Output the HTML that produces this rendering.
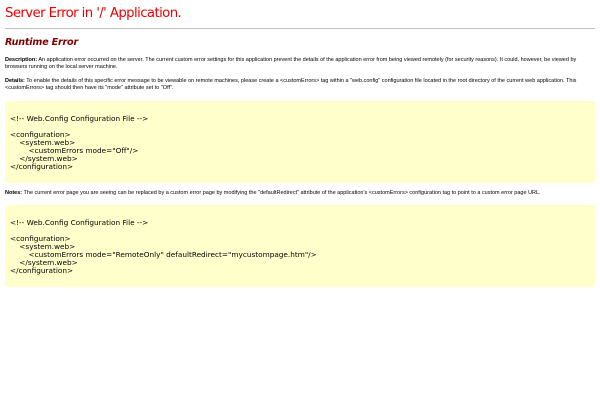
<!DOCTYPE html>
<html><head><meta charset="utf-8"><style>
*{margin:0;padding:0}
body{width:600px;height:400px;background:#fff;position:relative;font-family:"Liberation Sans",Arial,sans-serif;color:#000;overflow:hidden}
.a{position:absolute;white-space:nowrap}
h1{position:absolute;left:5px;top:6px;font-weight:normal;font-size:13.3px;color:#e00;font-family:"DejaVu Sans","Liberation Sans",sans-serif;letter-spacing:-0.6px}
hr{position:absolute;left:5px;width:590px;top:28px;border:0;border-top:1px solid #c0c0c0}
h2{position:absolute;left:5px;top:37px;font-size:9.6px;font-style:italic;font-weight:bold;color:#800000;font-family:"DejaVu Sans",sans-serif;letter-spacing:-0.2px}
.t{font-size:5.5px;line-height:7px;left:5px}
.box{position:absolute;left:5px;width:590px;background:#ffffcc}
.pre{position:absolute;left:5px;font-family:"DejaVu Sans",sans-serif;font-size:7.3px;line-height:8px;white-space:pre;color:#000}
</style></head><body>
<h1>Server Error in '/' Application.</h1>
<hr>
<h2>Runtime Error</h2>
<div class="a t" style="top:57px"><b>Description:</b> An application error occurred on the server. The current custom error settings for this application prevent the details of the application error from being viewed remotely (for security reasons). It could, however, be viewed by<br>browsers running on the local server machine.</div>
<div class="a t" style="top:78px"><b>Details:</b> To enable the details of this specific error message to be viewable on remote machines, please create a &lt;customErrors&gt; tag within a "web.config" configuration file located in the root directory of the current web application. This<br>&lt;customErrors&gt; tag should then have its "mode" attribute set to "Off".</div>
<div class="box" style="top:101px;height:82px"><div class="pre" style="top:14px">&lt;!-- Web.Config Configuration File --&gt;

&lt;configuration&gt;
    &lt;system.web&gt;
        &lt;customErrors mode="Off"/&gt;
    &lt;/system.web&gt;
&lt;/configuration&gt;</div></div>
<div class="a t" style="top:190px"><b>Notes:</b> The current error page you are seeing can be replaced by a custom error page by modifying the "defaultRedirect" attribute of the application's &lt;customErrors&gt; configuration tag to point to a custom error page URL.</div>
<div class="box" style="top:205px;height:82px"><div class="pre" style="top:14px">&lt;!-- Web.Config Configuration File --&gt;

&lt;configuration&gt;
    &lt;system.web&gt;
        &lt;customErrors mode="RemoteOnly" defaultRedirect="mycustompage.htm"/&gt;
    &lt;/system.web&gt;
&lt;/configuration&gt;</div></div>
</body></html>
